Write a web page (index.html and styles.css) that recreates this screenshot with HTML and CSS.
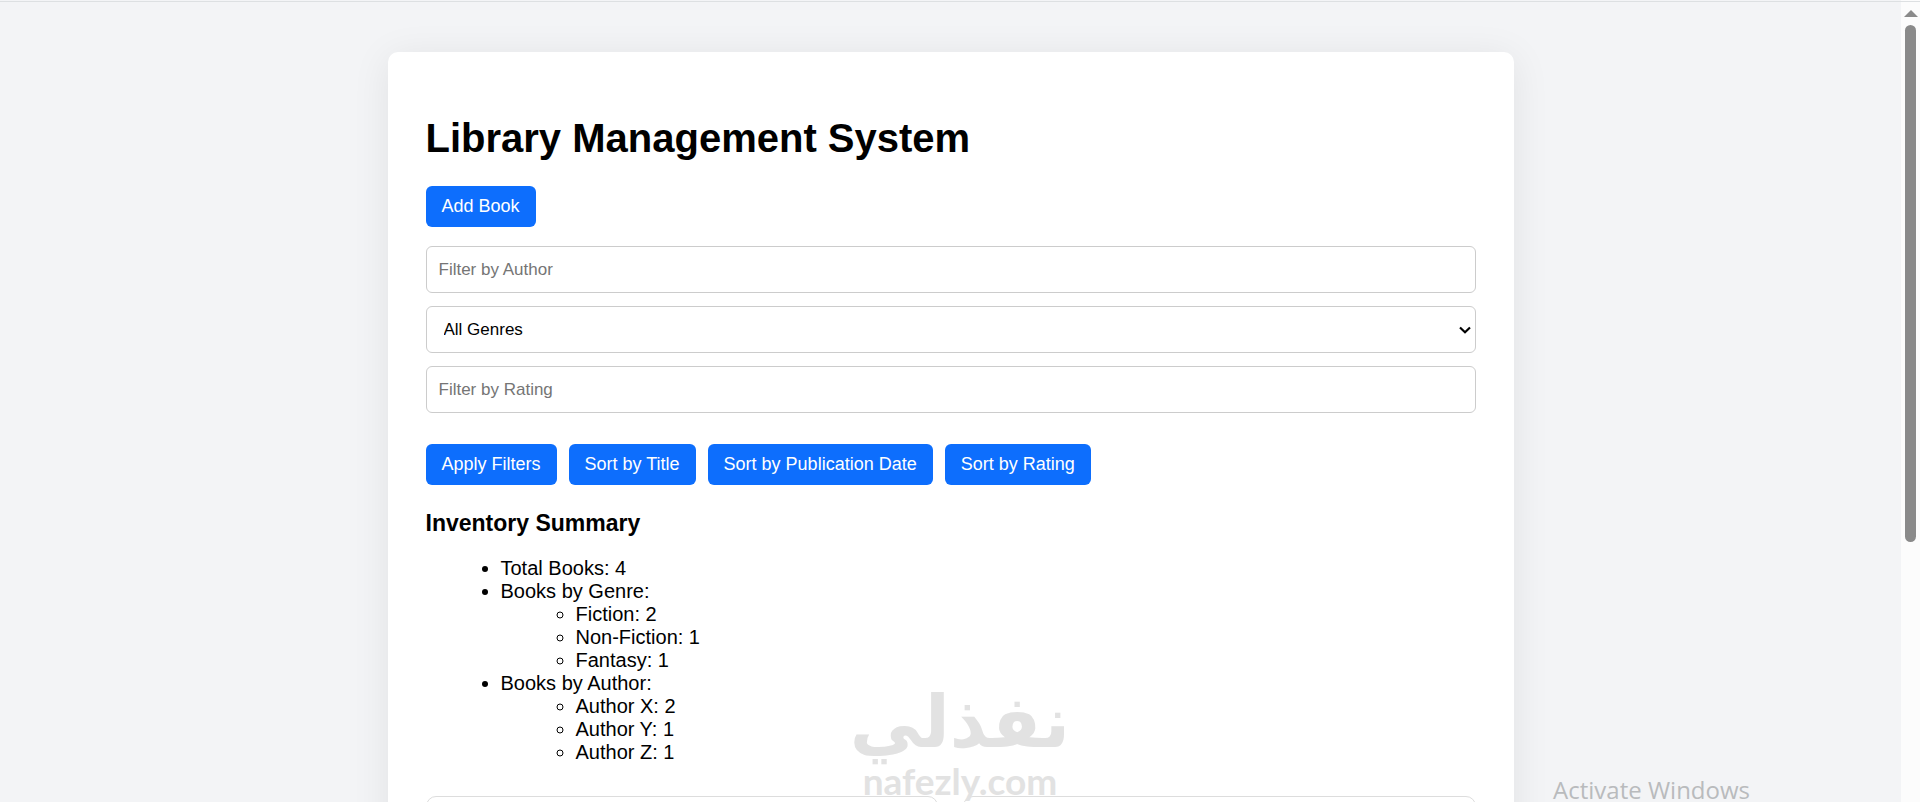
FILE: index.html
```html
<!DOCTYPE html>
<html lang="en">
<head>
    <meta charset="UTF-8">
    <meta name="viewport" content="width=device-width, initial-scale=1.0">
    <title>Library Management System</title>
    <link rel="stylesheet" href="styles.css">
</head>
<body>

    <main class="page">
        <div class="container">
            <h1>Library Management System</h1>
            <button type="button" id="add-book">Add Book</button>

            <div class="filters">
                <input type="text" id="filter-author" placeholder="Filter by Author" aria-label="Filter by Author">
                <div class="select-wrap">
                    <select id="filter-genre" aria-label="Genre">
                        <option value="">All Genres</option>
                        <option value="Fiction">Fiction</option>
                        <option value="Non-Fiction">Non-Fiction</option>
                        <option value="Fantasy">Fantasy</option>
                    </select>
                    <svg class="select-arrow" viewBox="0 0 12 8" aria-hidden="true">
                        <path d="M1 1.5 L6 6.2 L11 1.5" fill="none" stroke="#000" stroke-width="2.2"/>
                    </svg>
                </div>
                <input type="text" id="filter-rating" placeholder="Filter by Rating" aria-label="Filter by Rating">
            </div>

            <div class="actions">
                <button type="button">Apply Filters</button>
                <button type="button">Sort by Title</button>
                <button type="button">Sort by Publication Date</button>
                <button type="button">Sort by Rating</button>
            </div>

            <h3>Inventory Summary</h3>
            <ul class="summary">
                <li>Total Books: 4</li>
                <li>Books by Genre:
                    <ul>
                        <li>Fiction: 2</li>
                        <li>Non-Fiction: 1</li>
                        <li>Fantasy: 1</li>
                    </ul>
                </li>
                <li>Books by Author:
                    <ul>
                        <li>Author X: 2</li>
                        <li>Author Y: 1</li>
                        <li>Author Z: 1</li>
                    </ul>
                </li>
            </ul>

            <div class="book-list">
                <div class="book"></div>
                <div class="book"></div>
            </div>
        </div>
    </main>

    <div class="scrollbar" aria-hidden="true">
        <div class="scroll-up"></div>
        <div class="scroll-thumb"></div>
    </div>

    <div class="watermark">
        <div class="watermark-name" lang="ar" dir="rtl">نفذلي</div>
        <div class="watermark-site">nafezly.com</div>
    </div>
    <div class="activate">Activate Windows</div>

</body>
</html>
```
FILE: styles.css
```css
* {
    box-sizing: border-box;
}

body {
    font-family: Arial, "Liberation Sans", sans-serif;
    font-size: 20px;
    line-height: 23px;
    margin: 0;
    height: 100vh;
    overflow: hidden;
    position: relative;
    display: flex;
    background-color: #f3f4f6;
    color: #000;
}

/* hairline under the browser toolbar */
body::before {
    content: "";
    position: absolute;
    top: 1px;
    left: 0;
    right: 0;
    height: 1px;
    background: #dde0e2;
}

.page {
    flex: 1;
    min-width: 0;
    padding: 52px 20px 0;
}

.container {
    max-width: 1126px;
    margin: 0 auto;
    padding: 38px;
    background: #fff;
    border-radius: 10px;
    box-shadow: 0 5px 38px rgba(0, 0, 0, 0.08);
}

h1 {
    font-size: 40px;
    line-height: 46px;
    margin: 25px 0;
}

h3 {
    font-size: 23px;
    line-height: 27px;
    margin: 25px 0 20px;
}

button {
    height: 41px;
    padding: 0 16px;
    border: none;
    border-radius: 6px;
    background-color: #0d6efd;
    color: #fff;
    font-family: inherit;
    font-size: 18px;
    cursor: pointer;
}

button:hover {
    background-color: #0b5ed7;
}

.filters {
    display: flex;
    flex-direction: column;
    gap: 13px;
    margin: 19px 0 31px;
}

input,
select {
    display: block;
    width: 100%;
    height: 47px;
    padding: 0 12px;
    border: 1px solid #ccc;
    border-radius: 6px;
    background: #fff;
    color: #000;
    font-family: inherit;
    font-size: 17px;
}

input::placeholder {
    color: #757575;
}

select {
    appearance: none;
    padding: 0 17px;
}

.select-wrap {
    position: relative;
}

.select-arrow {
    position: absolute;
    top: 20px;
    right: 5px;
    width: 12px;
    height: 8px;
    pointer-events: none;
}

.actions {
    display: flex;
    flex-wrap: wrap;
    gap: 12px;
}

.summary {
    margin: 0;
}

.summary,
.summary ul {
    padding-left: 75px;
}

.book-list {
    display: grid;
    grid-template-columns: 1fr 1fr;
    gap: 25px;
    margin-top: 32px;
}

.book {
    min-height: 200px;
    border: 1px solid #ddd;
    border-radius: 10px;
}

.scrollbar {
    width: 19px;
    padding-top: 10px;
    display: flex;
    flex-direction: column;
    align-items: center;
    gap: 8px;
    background: #fcfcfc;
}

.scroll-up {
    border: 7px solid transparent;
    border-top: none;
    border-bottom: 7px solid #8a8a8a;
}

.scroll-thumb {
    width: 11px;
    height: 517px;
    border-radius: 6px;
    background: #8a8a8a;
}

.watermark {
    position: absolute;
    bottom: 0;
    left: 0;
    right: 0;
    text-align: center;
    color: #e2e2e2;
    pointer-events: none;
}

.watermark-name {
    font-family: "DejaVu Sans", sans-serif;
    font-size: 72px;
    font-weight: bold;
    line-height: 76px;
}

.watermark-site {
    font-family: Lato, sans-serif;
    font-size: 37px;
    font-weight: bold;
    line-height: 42px;
}

.activate {
    position: absolute;
    right: 170px;
    bottom: 0;
    font-family: "Open Sans", sans-serif;
    font-size: 24px;
    line-height: 24px;
    color: #b9bbbd;
}
```
